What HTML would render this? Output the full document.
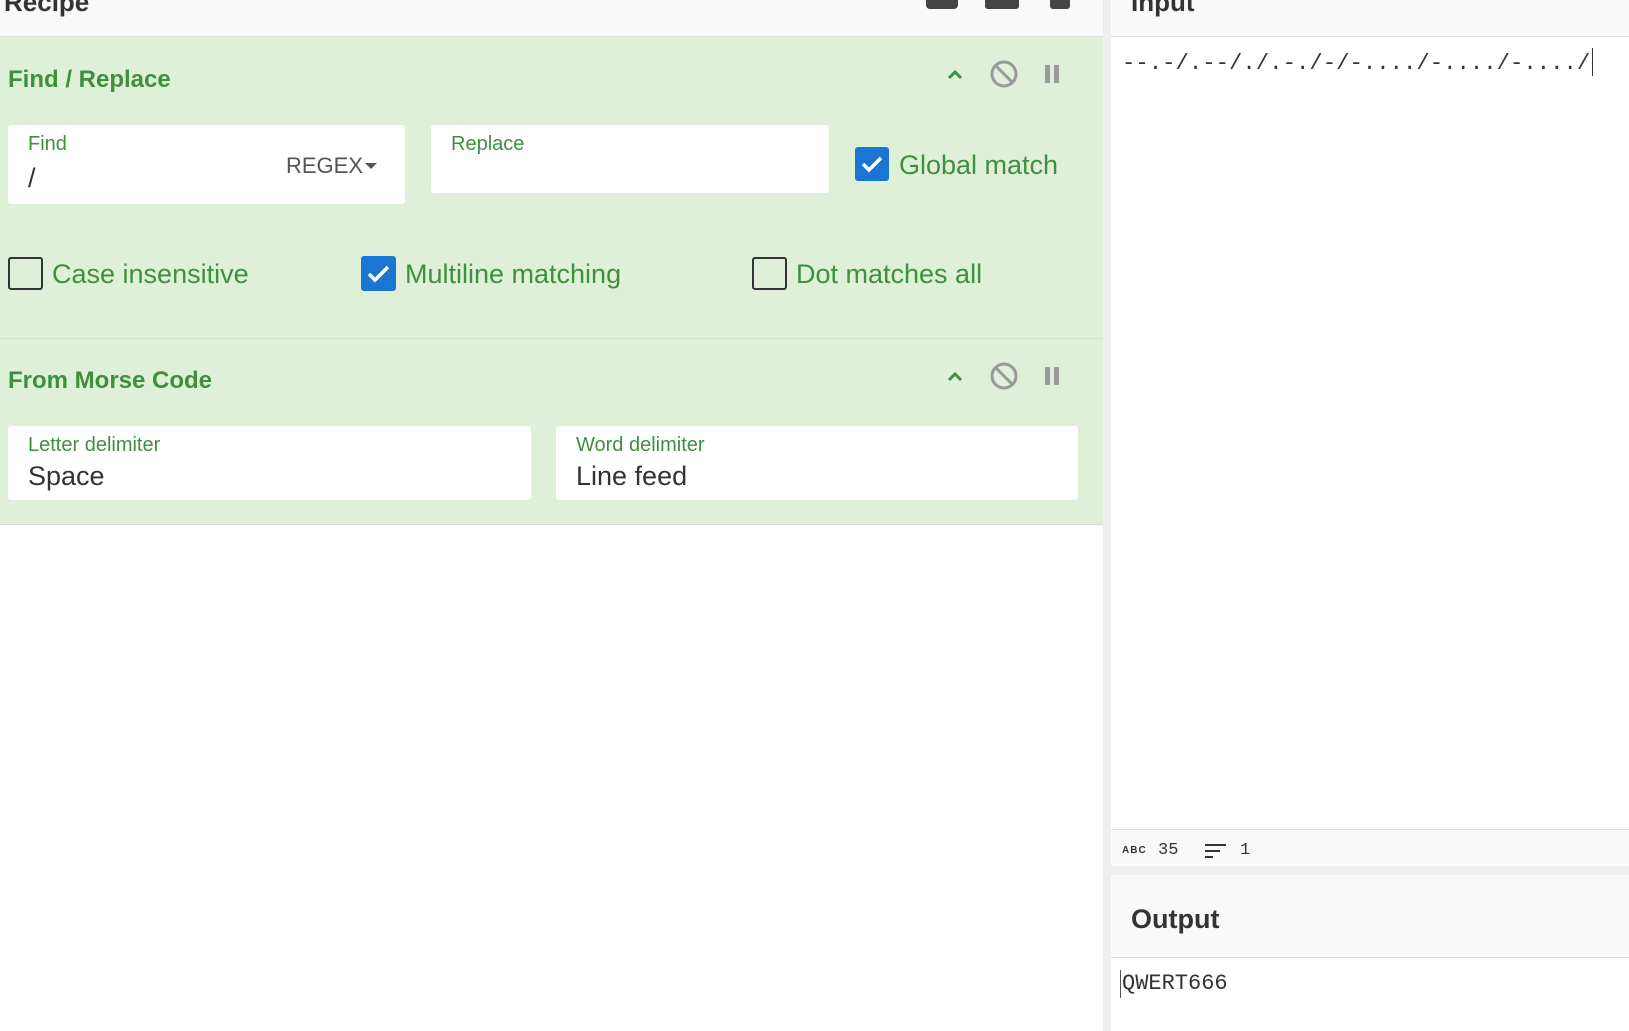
<!DOCTYPE html><html><head><style>
body{margin:0;width:1629px;height:1031px;position:relative;overflow:hidden;background:#fff;font-family:"Liberation Sans",sans-serif}
.a{position:absolute}
.box{position:absolute;background:#fff;border-radius:3px}
.lbl{position:absolute;left:20px;top:8px;font-size:20px;color:#3f8f3f}
.val{position:absolute;left:20px;font-size:27px;color:#333}
.cb{position:absolute;width:31px;height:31px;border:2px solid #333;border-radius:3px;box-sizing:border-box}
.cb.on{background:#1976d2;border-color:#1976d2}
.ct{position:absolute;font-size:27px;color:#3f8f3f}
.title{position:absolute;left:8px;font-size:24px;font-weight:bold;color:#3f8f3f}
.mono{font-family:"Liberation Mono",monospace;color:#333}
</style></head><body>
<div class="a" style="left:0;top:0;width:1103px;height:36px;background:#f9f9f9;border-bottom:1px solid #ddd"></div>
<div class="a" style="left:4px;top:-13px;font-size:26px;font-weight:bold;color:#333">Recipe</div>
<div class="a" style="left:926px;top:-10px;width:32px;height:19px;background:#444;border-radius:4px"></div>
<div class="a" style="left:985px;top:-10px;width:34px;height:19px;background:#444;border-radius:3px"></div>
<div class="a" style="left:1050px;top:-10px;width:20px;height:19px;background:#444;border-radius:3px"></div>
<div class="a" style="left:0;top:37px;width:1103px;height:487px;background:#dff0d8;border-bottom:1px solid #cfe3c7"></div>
<div class="a" style="left:0;top:338px;width:1103px;height:1px;background:#cfe3c7"></div>
<div class="title" style="top:66px">Find / Replace</div>
<div class="title" style="top:367px">From Morse Code</div>
<svg class="a" style="left:940px;top:56px" width="130" height="36"><path d="M9 22l6-6 6 6" stroke="#3f8f3f" stroke-width="3" fill="none"/><circle cx="64" cy="18" r="12" stroke="#999" stroke-width="3" fill="none"/><path d="M56 10l16 16" stroke="#999" stroke-width="3"/><rect x="105" y="9" width="5" height="18" fill="#999"/><rect x="114" y="9" width="5" height="18" fill="#999"/></svg>
<svg class="a" style="left:940px;top:358px" width="130" height="36"><path d="M9 22l6-6 6 6" stroke="#3f8f3f" stroke-width="3" fill="none"/><circle cx="64" cy="18" r="12" stroke="#999" stroke-width="3" fill="none"/><path d="M56 10l16 16" stroke="#999" stroke-width="3"/><rect x="105" y="9" width="5" height="18" fill="#999"/><rect x="114" y="9" width="5" height="18" fill="#999"/></svg>
<div class="box" style="left:8px;top:125px;width:397px;height:79px"><div class="lbl">Find</div><div class="val" style="top:38px">/</div><div class="a" style="left:278px;top:28px;font-size:22px;color:#555">REGEX</div><div class="a" style="left:357px;top:38px;border:6px solid transparent;border-top:6px solid #555"></div></div>
<div class="box" style="left:431px;top:125px;width:398px;height:68px"><div class="lbl">Replace</div></div>
<div class="cb on" style="left:855px;top:147px;width:34px;height:34px"></div>
<svg class="a" style="left:855px;top:147px" width="34" height="34"><path d="M8 17l6 6 12-12" stroke="#fff" stroke-width="3.5" fill="none"/></svg>
<div class="ct" style="left:899px;top:150px">Global match</div>
<div class="cb" style="left:8px;top:257px;width:35px;height:33px"></div>
<div class="ct" style="left:52px;top:259px">Case insensitive</div>
<div class="cb on" style="left:361px;top:256px;width:35px;height:35px"></div>
<svg class="a" style="left:361px;top:256px" width="35" height="35"><path d="M8 18l6 6 13-13" stroke="#fff" stroke-width="3.5" fill="none"/></svg>
<div class="ct" style="left:405px;top:259px">Multiline matching</div>
<div class="cb" style="left:752px;top:257px;width:35px;height:33px"></div>
<div class="ct" style="left:796px;top:259px">Dot matches all</div>
<div class="box" style="left:8px;top:426px;width:523px;height:74px"><div class="lbl">Letter delimiter</div><div class="val" style="top:35px">Space</div></div>
<div class="box" style="left:556px;top:426px;width:522px;height:74px"><div class="lbl">Word delimiter</div><div class="val" style="top:35px">Line feed</div></div>
<div class="a" style="left:1103px;top:0;width:8px;height:1031px;background:#eee"></div>
<div class="a" style="left:1111px;top:0;width:518px;height:36px;background:#f9f9f9;border-bottom:1px solid #ddd"></div>
<div class="a" style="left:1131px;top:-13px;font-size:26px;font-weight:bold;color:#333">Input</div>
<div class="a mono" style="left:1122px;top:50px;font-size:22.3px">--.-/.--/./.-./-/-..../-..../-..../</div>
<div class="a" style="left:1592px;top:48px;width:1px;height:28px;background:#333"></div>
<div class="a" style="left:1111px;top:829px;width:518px;height:37px;background:#f9f9f9;border-top:1px solid #ddd"></div>
<div class="a" style="left:1122px;top:845px;font-size:10px;font-weight:bold;color:#333;letter-spacing:1px">ABC</div>
<div class="a mono" style="left:1158px;top:841px;font-size:17px">35</div>
<svg class="a" style="left:1204px;top:842px" width="24" height="18"><path d="M1 3h21M1 9h15M1 15h8" stroke="#333" stroke-width="2"/></svg>
<div class="a mono" style="left:1240px;top:841px;font-size:17px">1</div>
<div class="a" style="left:1111px;top:866px;width:518px;height:9px;background:#eee"></div>
<div class="a" style="left:1111px;top:875px;width:518px;height:82px;background:#f9f9f9;border-bottom:1px solid #ddd"></div>
<div class="a" style="left:1131px;top:904px;font-size:27px;font-weight:bold;color:#333">Output</div>
<div class="a mono" style="left:1122px;top:971px;font-size:22px">QWERT666</div>
<div class="a" style="left:1120px;top:970px;width:1px;height:28px;background:#555"></div>
</body></html>
